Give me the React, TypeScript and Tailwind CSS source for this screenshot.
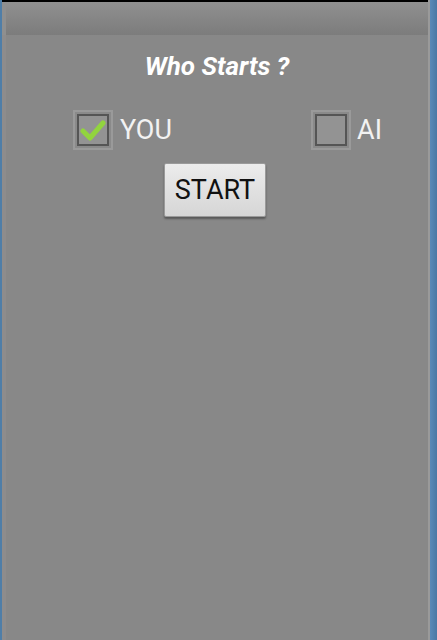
import { useState } from "react";

const CheckBox = ({ checked, onClick }: { checked: boolean; onClick: () => void }) => {
  return (
    <button
      onClick={onClick}
      className="w-[40px] h-[40px] border-2 border-[#9a9a9a] bg-[#8a8a8a] flex items-center justify-center p-[2px]"
    >
      <div className="w-full h-full border-2 border-[#555] bg-[#939393] flex items-center justify-center">
        {checked && (
          <svg width="26" height="22" viewBox="0 0 26 22">
            <path
              d="M3 12 L10 19 L23 4"
              fill="none"
              stroke="#92d43e"
              strokeWidth="5"
              strokeLinecap="round"
              strokeLinejoin="round"
            />
          </svg>
        )}
      </div>
    </button>
  );
};

const App = () => {
  const [who, setWho] = useState<"you" | "ai">("you");

  return (
    <div className="w-[437px] h-[640px] flex bg-black font-['Roboto',sans-serif]">
      <div className="w-[2px] bg-[#4f7ea8]" />
      <div className="flex-1 flex flex-col border-t-2 border-black">
        <div className="h-[33px] bg-gradient-to-b from-[#909090] to-[#7c7c7c] border-l-4 border-[#8f8f8f]" />
        <div className="flex-1 bg-[#888888] border-l-4 border-[#8e8c8c] flex flex-col items-center">
          <p className="mt-[18px] text-[26px] font-bold italic text-white leading-none">Who Starts ?</p>
          <div className="w-full flex justify-between items-center mt-[31px] pl-[67px] pr-[46px]">
            <div className="flex items-center gap-[7px]">
              <CheckBox checked={who === "you"} onClick={() => setWho("you")} />
              <span className="text-[27px] text-[#f2f2f2] leading-none">YOU</span>
            </div>
            <div className="flex items-center gap-[6px]">
              <CheckBox checked={who === "ai"} onClick={() => setWho("ai")} />
              <span className="text-[27px] text-[#f2f2f2] leading-none">AI</span>
            </div>
          </div>
          <button className="mt-[13px] w-[102px] h-[54px] bg-gradient-to-b from-[#ececec] to-[#d6d6d6] border border-[#9a9a9a] rounded-[2px] shadow-[0_2px_2px_rgba(0,0,0,0.35)] text-[27px] text-[#111] -ml-[4px]">
            START
          </button>
        </div>
      </div>
      <div className="w-[2px] bg-[#9a9a9a]" />
      <div className="w-[7px] bg-gradient-to-r from-[#5a8ab8] to-[#4a78a4]" />
    </div>
  );
};

export default App;
